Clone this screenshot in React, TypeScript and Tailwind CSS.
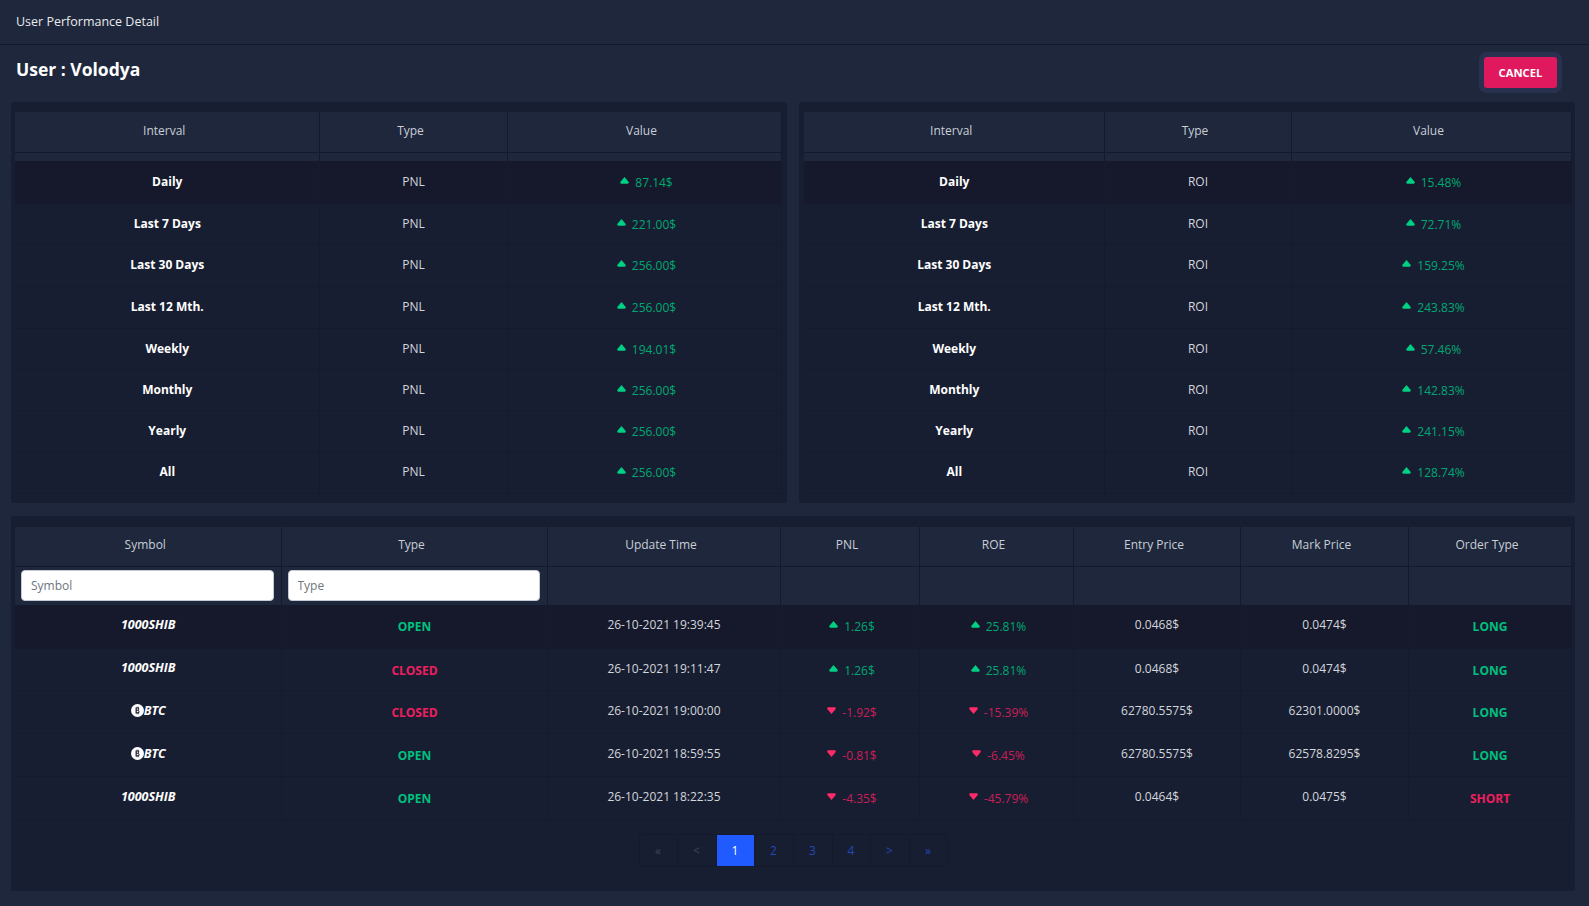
import React from "react";

const SANS = "font-['Open_Sans','Noto_Sans',sans-serif]";

function Arrow({ down }: { down?: boolean }) {
  return (
    <svg width="9" height="7" viewBox="0 0 9 7" className={`mr-[6px] inline-block align-[3px] ${down ? "text-[#ff2a68]" : "text-[#00d084]"}`}>
      {down ? (
        <path d="M1.4.3h6.2c1 0 1.5 1.1.9 1.9L4.5 7 .5 2.2C-.1 1.4.4.3 1.4.3z" fill="currentColor" />
      ) : (
        <path d="M4.5 0l4 4.8c.6.8.1 1.9-.9 1.9H1.4c-1 0-1.5-1.1-.9-1.9L4.5 0z" fill="currentColor" />
      )}
    </svg>
  );
}

function Delta({ value }: { value: string }) {
  const down = value.startsWith("-");
  return (
    <span className={`relative left-[2px] top-[1px] ${down ? "text-[#c91f58]" : "text-[#00a873]"}`}>
      <Arrow down={down} />
      {value}
    </span>
  );
}

function BtcLogo() {
  return (
    <svg width="13" height="13" viewBox="0 0 12 12" className="inline-block align-[-2px]">
      <circle cx="6" cy="6" r="6" fill="#fff" />
      <path d="M4.2 3.2h2.3c1.4 0 1.5 2 .4 2.5 1.4.3 1.3 3-.4 3H4.2zM5.3 4.2v1.1h1c.6 0 .6-1.1 0-1.1zM5.3 6.2v1.5h1.1c.8 0 .8-1.5 0-1.5zM5.2 2.5h.7v.8h-.7zM6.4 2.5h.7v.8h-.7zM5.2 8.6h.7v.8h-.7zM6.4 8.6h.7v.8h-.7z" fill="#171d30" fillRule="evenodd" />
    </svg>
  );
}

const th = "border-r border-b border-[#141a2b] bg-[#1e273b] h-[40px] pb-[2px] pr-[5px] text-center text-[12px] font-normal text-[#c9ced8]";
const td = "border-r border-b border-[#141b2d] pl-[1px] text-center text-[12px] text-[#d3d6dc]";

const INTERVALS = ["Daily", "Last 7 Days", "Last 30 Days", "Last 12 Mth.", "Weekly", "Monthly", "Yearly", "All"];
const INTERVAL_ROWS = ["h-[42px] bg-[#15192b]", "h-[41px]", "h-[42px]", "h-[42px]", "h-[41px]", "h-[41px]", "h-[41px]", "h-[42px]"];
const PNL = ["87.14$", "221.00$", "256.00$", "256.00$", "194.01$", "256.00$", "256.00$", "256.00$"];
const ROI = ["15.48%", "72.71%", "159.25%", "243.83%", "57.46%", "142.83%", "241.15%", "128.74%"];

function IntervalTable({ type, values, widths, pad }: { type: string; values: string[]; widths: number[]; pad: string }) {
  return (
    <section className={`rounded-[3px] bg-[#181e31] pb-[9px] pt-[10px] ${pad}`}>
      <table className="w-full table-fixed border-collapse">
        <colgroup>
          {widths.map((w, i) => (
            <col key={i} style={{ width: w }} />
          ))}
        </colgroup>
        <thead>
          <tr>
            <th className={th}>Interval</th>
            <th className={th}>Type</th>
            <th className={th}>Value</th>
          </tr>
          <tr>
            <th className="h-[9px] border-r border-[#141a2b] bg-[#1e273b]" />
            <th className="h-[9px] border-r border-[#141a2b] bg-[#1e273b]" />
            <th className="h-[9px] border-r border-[#141a2b] bg-[#1e273b]" />
          </tr>
        </thead>
        <tbody>
          {INTERVALS.map((name, i) => (
            <tr key={name} className={INTERVAL_ROWS[i]}>
              <td className={`${td} font-bold text-white`}>{name}</td>
              <td className={td}>{type}</td>
              <td className={td}>
                <Delta value={values[i]} />
              </td>
            </tr>
          ))}
        </tbody>
      </table>
    </section>
  );
}

type Order = {
  symbol: string;
  btc?: boolean;
  status: string;
  time: string;
  pnl: string;
  roe: string;
  entry: string;
  mark: string;
  side: string;
};

const ORDERS: Order[] = [
  { symbol: "1000SHIB", status: "OPEN", time: "26-10-2021 19:39:45", pnl: "1.26$", roe: "25.81%", entry: "0.0468$", mark: "0.0474$", side: "LONG" },
  { symbol: "1000SHIB", status: "CLOSED", time: "26-10-2021 19:11:47", pnl: "1.26$", roe: "25.81%", entry: "0.0468$", mark: "0.0474$", side: "LONG" },
  { symbol: "BTC", btc: true, status: "CLOSED", time: "26-10-2021 19:00:00", pnl: "-1.92$", roe: "-15.39%", entry: "62780.5575$", mark: "62301.0000$", side: "LONG" },
  { symbol: "BTC", btc: true, status: "OPEN", time: "26-10-2021 18:59:55", pnl: "-0.81$", roe: "-6.45%", entry: "62780.5575$", mark: "62578.8295$", side: "LONG" },
  { symbol: "1000SHIB", status: "OPEN", time: "26-10-2021 18:22:35", pnl: "-4.35$", roe: "-45.79%", entry: "0.0464$", mark: "0.0475$", side: "SHORT" },
];

const ORDER_ROWS = ["h-[44px] bg-[#15192b]", "h-[42px]", "h-[43px]", "h-[43px]", "h-[43px]"];
const ORDER_COLS = ["Symbol", "Type", "Update Time", "PNL", "ROE", "Entry Price", "Mark Price", "Order Type"];
const ORDER_WIDTHS = [266, 266, 233, 139, 154, 167, 168, 163];

function Tag({ text }: { text: string }) {
  const good = text === "OPEN" || text === "LONG";
  return <span className={`relative top-[1px] font-bold ${good ? "text-[#00c07f]" : "text-[#ee1f5f]"}`}>{text}</span>;
}

function FilterInput({ placeholder }: { placeholder: string }) {
  return (
    <input
      placeholder={placeholder}
      className="h-[31px] w-full rounded-[4px] border border-[#c5cad3] bg-white px-[9px] text-[12px] text-[#555] outline-none placeholder:text-[#6c757d]"
    />
  );
}

function OrdersTable() {
  return (
    <section className="mt-[13px] rounded-[3px] bg-[#181e31] px-1 pb-[24px] pt-[11px]">
      <table className="w-full table-fixed border-collapse">
        <colgroup>
          {ORDER_WIDTHS.map((w, i) => (
            <col key={i} style={{ width: w }} />
          ))}
        </colgroup>
        <thead>
          <tr>
            {ORDER_COLS.map((c) => (
              <th key={c} className={th}>
                {c}
              </th>
            ))}
          </tr>
          <tr className="h-[38px] bg-[#1e273b]">
            <th className="border-r border-[#141a2b] pl-[6px] pr-[7px] font-normal">
              <FilterInput placeholder="Symbol" />
            </th>
            <th className="border-r border-[#141a2b] pl-[6px] pr-[7px] font-normal">
              <FilterInput placeholder="Type" />
            </th>
            {ORDER_COLS.slice(2).map((c) => (
              <th key={c} className="border-r border-[#141a2b]" />
            ))}
          </tr>
        </thead>
        <tbody>
          {ORDERS.map((o, i) => (
            <tr key={i} className={ORDER_ROWS[i]}>
              <td className={`${td} font-bold italic text-white`}>
                <span className="relative top-[-1px] text-[12.5px]">
                  {o.btc ? <BtcLogo /> : null}
                  {o.symbol}
                </span>
              </td>
              <td className={td}>
                <Tag text={o.status} />
              </td>
              <td className={td}>
                <span className="relative top-[-1px]">{o.time}</span>
              </td>
              <td className={td}>
                <Delta value={o.pnl} />
              </td>
              <td className={td}>
                <Delta value={o.roe} />
              </td>
              <td className={td}>
                <span className="relative top-[-1px]">{o.entry}</span>
              </td>
              <td className={td}>
                <span className="relative top-[-1px]">{o.mark}</span>
              </td>
              <td className={td}>
                <Tag text={o.side} />
              </td>
            </tr>
          ))}
        </tbody>
      </table>
      <Pagination />
    </section>
  );
}

function Pagination() {
  const items = [
    { label: "«", w: 38, off: true },
    { label: "<", w: 39, off: true },
    { label: "1", w: 38, active: true },
    { label: "2", w: 39 },
    { label: "3", w: 39 },
    { label: "4", w: 38 },
    { label: ">", w: 39 },
    { label: "»", w: 37 },
  ];
  return (
    <nav className="mt-[14px] flex justify-center">
      <ul className="flex h-[33px] rounded-[3px] border border-[#141a2b]">
        {items.map((p) => (
          <li
            key={p.label}
            style={{ width: p.w }}
            className={`flex items-center justify-center border-r border-[#141a2b] text-[12px] last:border-r-0 ${
              p.active ? "bg-[#1f5bff] text-white" : p.off ? "text-[#3c465c]" : "text-[#2148b8]"
            }`}
          >
            {p.label}
          </li>
        ))}
      </ul>
    </nav>
  );
}

export default function App() {
  return (
    <div className={`${SANS} min-h-[906px] bg-[#1e273b] pb-[16px]`}>
      <header className="flex h-[45px] items-center border-b border-[#141a2b] px-4 text-[12.5px] text-[#e8eaee]">
        User Performance Detail
      </header>
      <div className="flex h-[57px] items-start justify-between pl-4 pr-[32px] pt-[12px]">
        <h1 className="text-[17.5px] font-bold leading-[25px] text-white">User : Volodya</h1>
        <button className="h-[31px] w-[73px] rounded-[3px] bg-[#e0195f] pt-[1px] text-[11.25px] font-bold text-white shadow-[0_0_0_5px_#28324e]">
          CANCEL
        </button>
      </div>
      <div className="px-[11px] pr-[14px]">
        <div className="grid grid-cols-[776px_776px] gap-x-[12px]">
          <IntervalTable type="PNL" values={PNL} widths={[304, 188, 274]} pad="pl-1 pr-[6px]" />
          <IntervalTable type="ROI" values={ROI} widths={[300, 187, 280]} pad="pl-[5px] pr-1" />
        </div>
        <OrdersTable />
      </div>
    </div>
  );
}
